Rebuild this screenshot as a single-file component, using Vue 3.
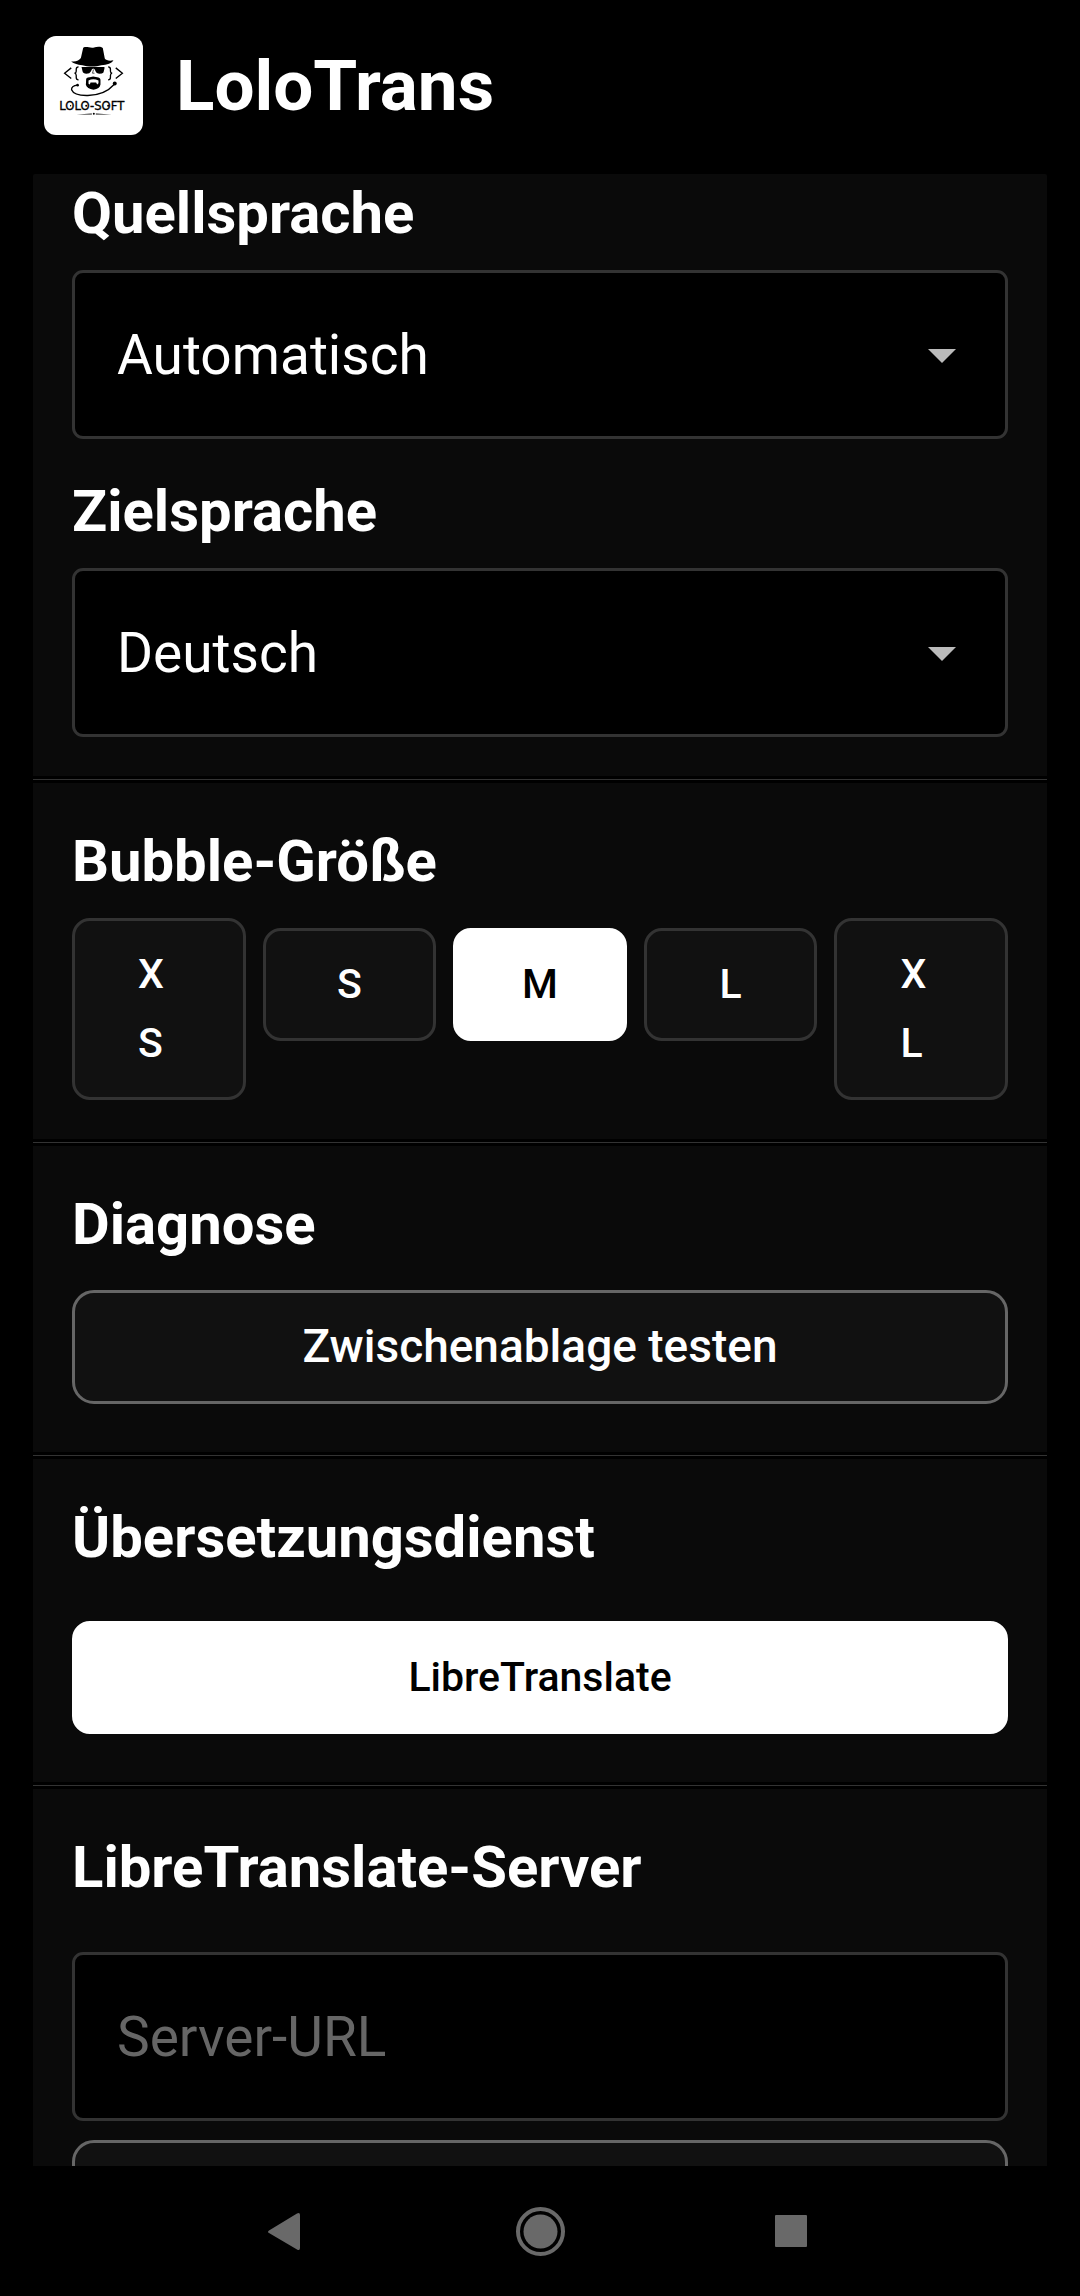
<template>
  <div class="app">
    <header class="app-header">
      <svg class="logo" viewBox="42 48 298 298" role="img" aria-label="Lolo-Soft">
        <rect x="42" y="48" width="298" height="298" fill="#fff" />
        <!-- hat -->
        <path d="M160 83 C170 79 178 84 190 83 C202 80 213 79 219 84 L225 116 C229 122 240 124 251 121 C247 130 232 135 214 136 C198 142 172 141 158 136 C142 135 129 130 124 124 C136 127 149 121 153 114 Z" />
        <!-- glasses -->
        <path d="M155 141 H224 V146 L221 158 Q218 162 208 162 Q199 161 197 154 L195 149 L190 146 L186 149 L183 155 Q180 162 170 162 Q159 161 158 154 Z" />
        <path d="M191 149 L188 160 H194" fill="none" stroke="#000" stroke-width="2" />
        <!-- beard -->
        <path fill-rule="evenodd" d="M169 177 Q171 171 180 172 L190 170 L202 172 Q211 172 212 180 V194 Q210 207 191 210 Q171 207 168 195 Z M176 182 V192 L180 194 L182 188 H199 L202 194 L206 190 V182 Q190 175 176 182 Z" />
        <path d="M184 190 H198 L195 198 H187 Z" />
        <!-- brackets and smile line -->
        <g fill="none" stroke="#000" stroke-width="4">
          <path d="M124 144 L104 160 L124 176" />
          <path d="M258 144 L278 160 L258 176" />
          <path d="M146 141 Q139 141 139 149 V154 Q139 159 134 160 Q139 161 139 167 V172 Q139 180 146 180" />
          <path d="M235 141 Q242 141 242 149 V154 Q242 159 247 160 Q242 161 242 167 V172 Q242 180 235 180" />
          <path d="M143 196 Q124 198 125 210 Q132 228 174 227 Q225 226 253 194" />
        </g>
        <circle cx="143" cy="196" r="4" />
        <circle cx="255" cy="191" r="6" />
        <text x="88" y="270" class="logo-text">LOLO-SOFT</text>
        <circle cx="122" cy="258" r="2" />
        <circle cx="169" cy="258" r="3" />
        <circle cx="235" cy="258" r="3" />
        <path d="M140 284 L186 281 V284 Z M246 284 L198 281 V284 Z" />
        <circle cx="192" cy="282" r="3" />
      </svg>
      <h1 class="title">LoloTrans</h1>
    </header>

    <main class="panel">
      <section class="section first">
        <label class="heading" for="source">Quellsprache</label>
        <div class="select-wrap">
          <select id="source" v-model="source" class="field">
            <option v-for="l in ['Automatisch', ...languages]" :key="l">{{ l }}</option>
          </select>
          <svg class="arrow" viewBox="0 0 28 14"><path d="M0 0h28L14 14z" /></svg>
        </div>
        <label class="heading next" for="target">Zielsprache</label>
        <div class="select-wrap">
          <select id="target" v-model="target" class="field">
            <option v-for="l in languages" :key="l">{{ l }}</option>
          </select>
          <svg class="arrow" viewBox="0 0 28 14"><path d="M0 0h28L14 14z" /></svg>
        </div>
      </section>

      <section class="section">
        <h2 class="heading">Bubble-Größe</h2>
        <div class="sizes">
          <div v-for="s in sizes" :key="s" class="slot">
            <button
              type="button"
              class="btn choice"
              :class="{ active: s === size }"
              :aria-pressed="s === size"
              @click="size = s"
            >
              <span class="size-text">{{ s }}</span>
            </button>
          </div>
        </div>
      </section>

      <section class="section">
        <h2 class="heading">Diagnose</h2>
        <div class="slot">
          <button type="button" class="btn outlined">Zwischenablage testen</button>
        </div>
      </section>

      <section class="section">
        <h2 class="heading service">Übersetzungsdienst</h2>
        <div class="slot">
          <button type="button" class="btn choice active">LibreTranslate</button>
        </div>
      </section>

      <section class="section">
        <label class="heading server" for="server">LibreTranslate-Server</label>
        <input id="server" v-model="serverUrl" class="field" type="url" placeholder="Server-URL" />
        <div class="slot save">
          <button type="button" class="btn outlined" aria-label="Speichern"></button>
        </div>
      </section>
    </main>

    <nav class="nav-bar">
      <button type="button" class="nav-btn" aria-label="Zurück">
        <svg viewBox="0 0 60 60"><path d="M12 29.500 L40 12.500 Q43 11 43 14 V47 Q43 50 40 48.500 L12 32 Q10 31 12 29.500Z" /></svg>
      </button>
      <button type="button" class="nav-btn" aria-label="Startseite">
        <svg viewBox="0 0 60 60">
          <circle cx="30.500" cy="30.500" r="22.500" fill="none" stroke="#696969" stroke-width="4" />
          <circle cx="30.500" cy="30.500" r="17" />
        </svg>
      </button>
      <button type="button" class="nav-btn" aria-label="Übersicht">
        <svg viewBox="0 0 60 60"><rect x="12" y="14" width="32" height="32" rx="1" /></svg>
      </button>
    </nav>
  </div>
</template>

<script setup>
import { ref } from 'vue'

const languages = ['Deutsch', 'Englisch', 'Französisch', 'Spanisch', 'Italienisch']
const sizes = ['XS', 'S', 'M', 'L', 'XL']

const source = ref('Automatisch')
const target = ref('Deutsch')
const size = ref('M')
const serverUrl = ref('')
</script>

<style>
body {
  margin: 0;
  background: #000;
}
</style>

<style scoped>
.app {
  display: flex;
  flex-direction: column;
  height: 100vh;
  background: #000;
  color: #fff;
  font-family: Roboto, 'Noto Sans', sans-serif;
}

.app-header {
  display: flex;
  align-items: center;
  gap: 33px;
  padding: 36px 44px 39px;
}

.logo {
  width: 99px;
  height: 99px;
  border-radius: 12px;
}

.logo-text {
  font-family: 'DejaVu Sans', sans-serif;
  font-size: 35px;
  stroke: #000;
  stroke-width: 1;
}

.title {
  margin: 0;
  font-size: 71px;
  line-height: 84px;
  font-weight: 700;
}

.panel {
  flex: 1;
  min-height: 0;
  margin: 0 33px;
  overflow: hidden;
  border-radius: 2px 2px 0 0;
}

.section {
  padding: 45px 39px 39px;
  background: #0a0a0a;
}

.section.first {
  padding-top: 6px;
}

/* thin rule with a black band on either side */
.section + .section {
  position: relative;
  margin-top: 7px;
}

.section + .section::before {
  content: '';
  position: absolute;
  top: -4px;
  left: 0;
  right: 0;
  height: 1px;
  background: #333;
}

.heading {
  display: block;
  margin: 0 0 24px;
  font-size: 58px;
  line-height: 66px;
  font-weight: 700;
}

.heading.next {
  margin-top: 39px;
}

.heading.service {
  margin-bottom: 41px;
}

.heading.server {
  margin-bottom: 52px;
}

.select-wrap {
  position: relative;
}

.field {
  display: block;
  box-sizing: border-box;
  width: 100%;
  height: 169px;
  padding: 0 42px;
  border: 3px solid #333;
  border-radius: 11px;
  background: #000;
  color: #fff;
  font-family: inherit;
  font-size: 55px;
  appearance: none;
  outline: none;
}

.field::placeholder {
  color: #666;
  opacity: 1;
}

.arrow {
  position: absolute;
  top: 79px;
  right: 52px;
  width: 28px;
  height: 14px;
  fill: #bbb;
  pointer-events: none;
}

.sizes {
  display: grid;
  grid-template-columns: repeat(5, 1fr);
  align-items: start;
  gap: 17px;
}

.slot {
  display: flex;
  align-items: center;
  min-height: 132px;
}

.slot.save {
  margin-top: 10px;
}

.btn {
  display: flex;
  justify-content: center;
  box-sizing: border-box;
  width: 100%;
  min-height: 113px;
  padding: 19px 63px;
  border: 3px solid #333;
  background: #111;
  color: #fff;
  font-family: inherit;
  font-size: 41px;
  line-height: 69px;
  font-weight: 500;
}

.choice {
  border-radius: 18px;
}

.choice.active {
  border-color: #fff;
  background: #fff;
  color: #000;
}

.outlined {
  min-height: 114px;
  border-color: #666;
  border-radius: 22px;
  font-size: 46px;
}

.size-text {
  text-align: left;
  word-break: break-all;
}

.nav-bar {
  display: flex;
  justify-content: center;
  align-items: center;
  gap: 193px;
  height: 130px;
}

.nav-btn {
  width: 60px;
  height: 60px;
  padding: 0;
  border: 0;
  background: none;
}

.nav-btn svg {
  display: block;
  width: 60px;
  height: 60px;
  fill: #696969;
}
</style>
